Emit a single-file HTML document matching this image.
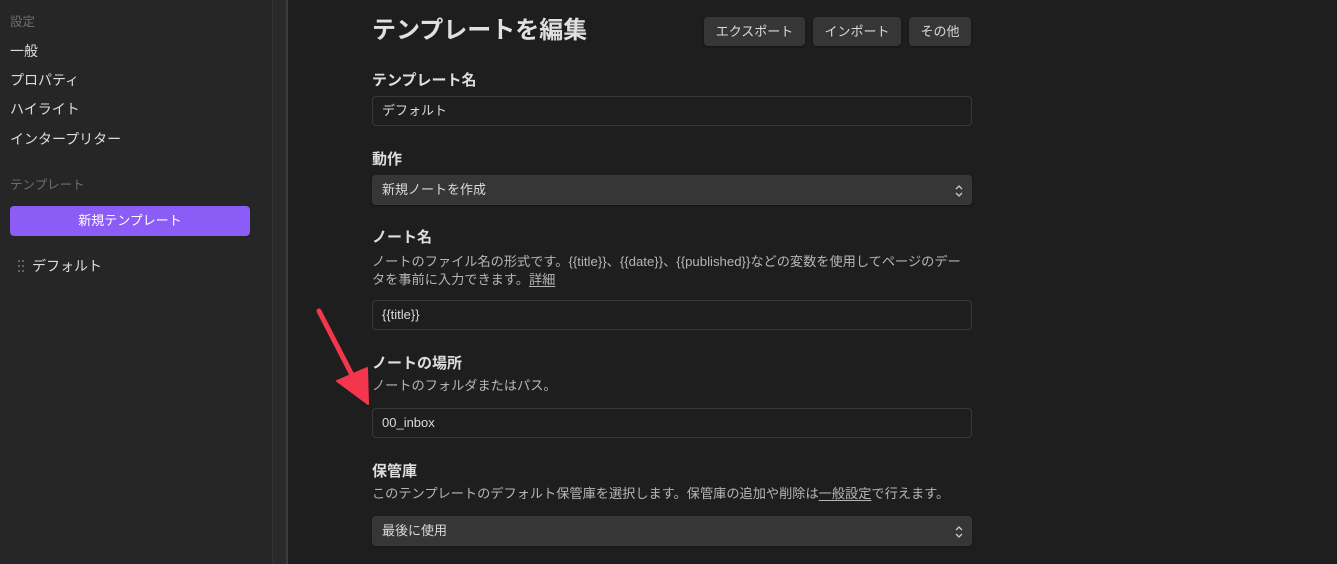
<!DOCTYPE html>
<html><head><meta charset="utf-8"><style>
*{margin:0;padding:0;box-sizing:border-box}
body{width:1337px;height:564px;overflow:hidden;background:#1e1e1e;font-family:"Liberation Sans","Noto Sans CJK JP",sans-serif;color:#dadada;position:relative}
.a{position:absolute;white-space:nowrap}
.side{position:absolute;left:0;top:0;width:272px;height:564px;background:#262626}
.scr{position:absolute;left:272px;top:0;width:14px;height:564px;background:#2a2a2a;border-left:1px solid #333}
.ln{position:absolute;left:286px;top:0;width:2px;height:564px;background:#3c3c3c}
.sl{font-size:14px;color:#dcdcdc;left:10px;line-height:20px}
.sg{font-size:12.5px;color:#6e6e6e;left:10px;line-height:18px}
.btn{position:absolute;top:17px;height:29px;background:#363636;border-radius:4px;font-size:13px;color:#dadada;text-align:center;line-height:29px;box-shadow:0 1px 2px rgba(0,0,0,.4)}
.lb{left:372px;font-size:15px;font-weight:bold;color:#dedede;line-height:20px}
.ds{left:372px;font-size:13.2px;color:#b5b5b5;line-height:18px}
.in{position:absolute;left:372px;width:600px;height:30px;border:1px solid #383838;border-radius:4px;background:#1e1e1e;font-size:13px;color:#dadada;padding-left:9px;line-height:28px}
.se{background:#363636;border-color:#3a3a3a;box-shadow:0 1px 2px rgba(0,0,0,.4)}
.se svg{position:absolute;right:7px;top:8px}
u{text-underline-offset:2px}
</style></head><body>
<div class="side"></div><div class="scr"></div><div class="ln"></div>
<div class="a sg" style="top:13px">設定</div>
<div class="a sl" style="top:41px">一般</div>
<div class="a sl" style="top:70px">プロパティ</div>
<div class="a sl" style="top:99px">ハイライト</div>
<div class="a sl" style="top:129px">インタープリター</div>
<div class="a sg" style="top:176px">テンプレート</div>
<div class="a" style="left:10px;top:206px;width:240px;height:30px;background:#8b5cf6;border-radius:4px;color:#fff;font-size:13px;text-align:center;line-height:30px">新規テンプレート</div>
<svg class="a" style="left:18px;top:259px" width="6" height="14"><g fill="#777"><circle cx="1" cy="2" r="1"/><circle cx="5" cy="2" r="1"/><circle cx="1" cy="7" r="1"/><circle cx="5" cy="7" r="1"/><circle cx="1" cy="12" r="1"/><circle cx="5" cy="12" r="1"/></g></svg>
<div class="a sl" style="left:32px;top:256px">デフォルト</div>

<div class="a" style="left:372px;top:16px;font-size:24px;font-weight:bold;color:#e0e0e0;line-height:30px">テンプレートを編集</div>
<div class="btn" style="left:704px;width:101px">エクスポート</div>
<div class="btn" style="left:813px;width:88px">インポート</div>
<div class="btn" style="left:909px;width:62px">その他</div>

<div class="a lb" style="top:71px">テンプレート名</div>
<div class="in" style="top:96px">デフォルト</div>
<div class="a lb" style="top:150px">動作</div>
<div class="in se" style="top:175px">新規ノートを作成<svg width="10" height="14" viewBox="0 0 10 14"><path d="M2 5l3-3 3 3M2 9l3 3 3-3" fill="none" stroke="#ccc" stroke-width="1.3"/></svg></div>
<div class="a lb" style="top:228px">ノート名</div>
<div class="a ds" style="top:253px">ノートのファイル名の形式です。{{title}}、{{date}}、{{published}}などの変数を使用してページのデー</div>
<div class="a ds" style="top:271px">タを事前に入力できます。<u>詳細</u></div>
<div class="in" style="top:300px">{{title}}</div>
<div class="a lb" style="top:354px">ノートの場所</div>
<div class="a ds" style="top:377px">ノートのフォルダまたはパス。</div>
<div class="in" style="top:408px">00_inbox</div>
<div class="a lb" style="top:462px">保管庫</div>
<div class="a ds" style="top:485px">このテンプレートのデフォルト保管庫を選択します。保管庫の追加や削除は<u>一般設定</u>で行えます。</div>
<div class="in se" style="top:516px">最後に使用<svg width="10" height="14" viewBox="0 0 10 14"><path d="M2 5l3-3 3 3M2 9l3 3 3-3" fill="none" stroke="#ccc" stroke-width="1.3"/></svg></div>

<svg class="a" style="left:0;top:0" width="1337" height="564">
<line x1="319" y1="311" x2="352" y2="375" stroke="#f4364c" stroke-width="5" stroke-linecap="round"/>
<path d="M337 381 L367 368 L368 404 Z" fill="#f4364c" stroke="#f4364c" stroke-width="2" stroke-linejoin="round"/>
</svg>
</body></html>
